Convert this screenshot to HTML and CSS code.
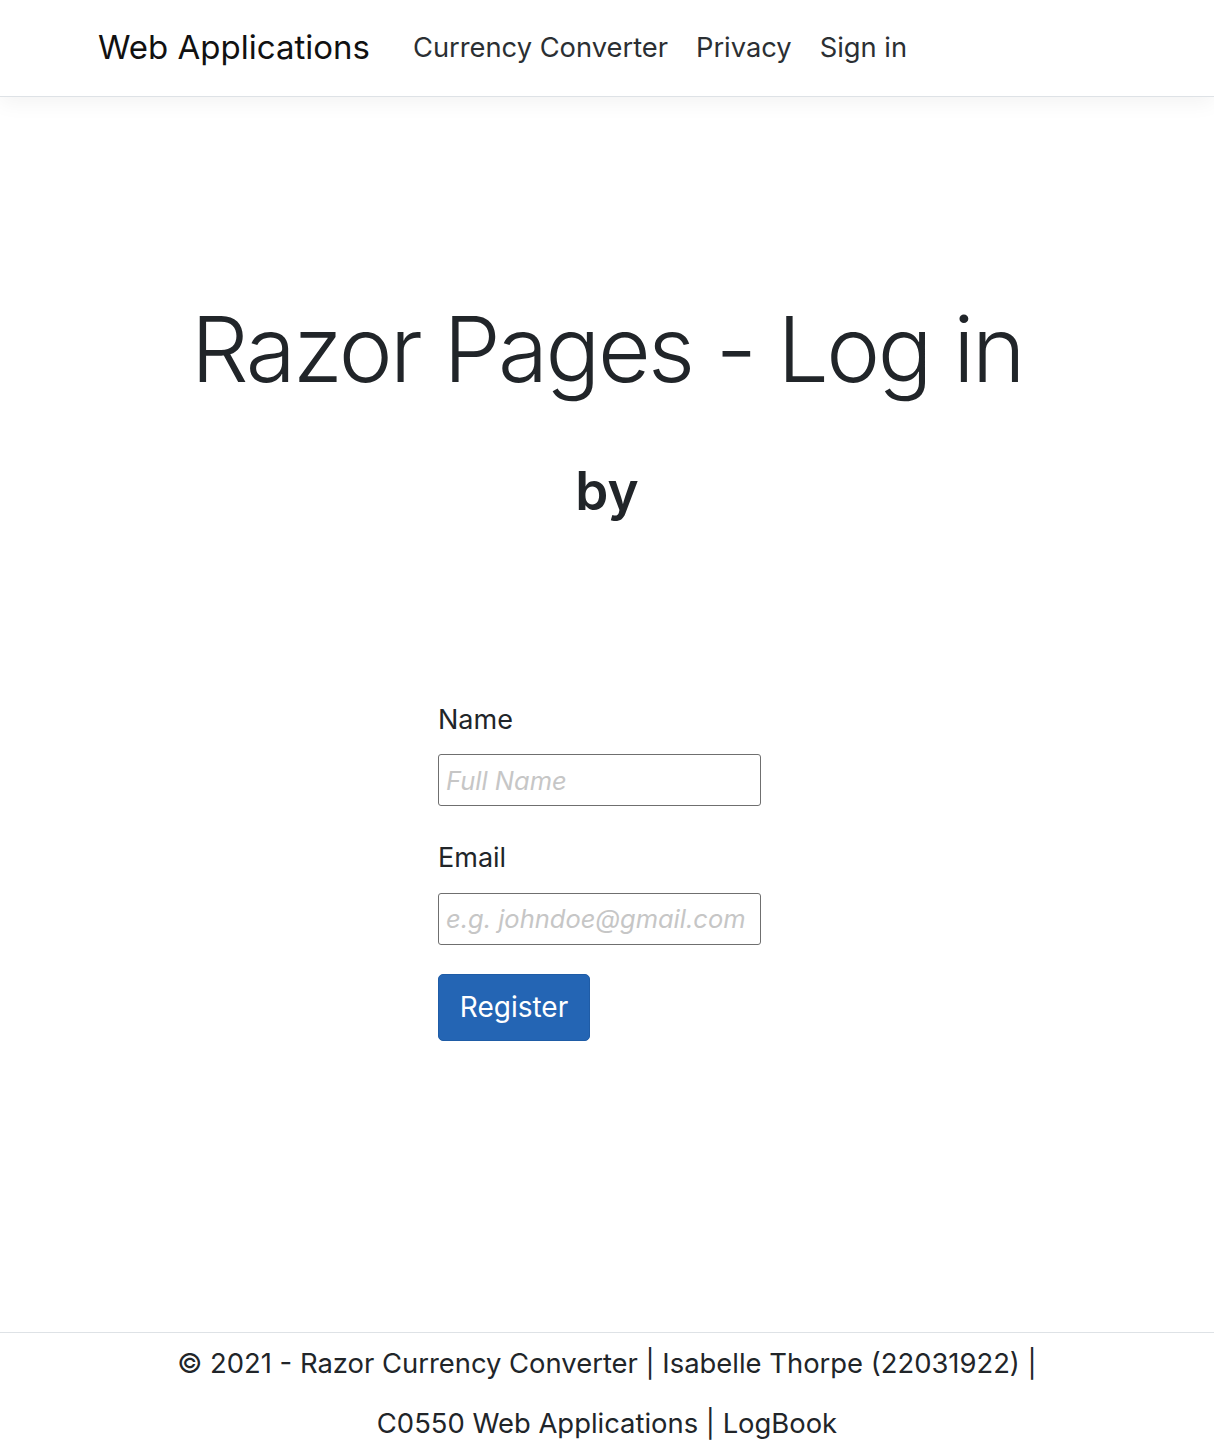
FILE: index.html
```html
<!DOCTYPE html>
<html lang="en">
<head>
<meta charset="utf-8">
<title>Razor Pages - Log in</title>
<link rel="stylesheet" href="styles.css">
</head>
<body>
<header class="navbar">
  <a class="brand" href="#">Web Applications</a>
  <nav class="nav">
    <a class="nav-link" href="#">Currency Converter</a>
    <a class="nav-link" href="#">Privacy</a>
    <a class="nav-link" href="#">Sign in</a>
  </nav>
</header>
<main class="main">
  <h1 class="title">Razor Pages - Log in</h1>
  <h2 class="subtitle">by</h2>
  <form class="form">
    <label class="label" for="name">Name</label>
    <input class="input" id="name" type="text" placeholder="Full Name">
    <label class="label" for="email">Email</label>
    <input class="input input-last" id="email" type="email" placeholder="e.g. johndoe@gmail.com">
    <button class="btn" type="button">Register</button>
  </form>
</main>
<footer class="footer">
  <div class="footer-inner">© 2021 - Razor Currency Converter | Isabelle Thorpe (22031922) | C0550 Web Applications | LogBook</div>
</footer>
</body>
</html>
```

FILE: styles.css
```css
* { box-sizing: border-box; }
html, body { margin: 0; padding: 0; }
body {
  font-family: Inter, "Noto Sans", "Liberation Sans", sans-serif;
  color: #212529;
  background: #fff;
  font-size: 27px;
  line-height: 1.5;
  min-height: 1450px;
  display: flex;
  flex-direction: column;
}
a { text-decoration: none; }

.navbar {
  height: 97px;
  display: flex;
  align-items: center;
  padding-left: 98px;
  border-bottom: 1px solid #dee2e6;
  box-shadow: 0 6px 20px rgba(0,0,0,.05);
  background: #fff;
}
.brand {
  font-size: 33px;
  color: #111;
  margin-right: 29px;
}
.nav { display: flex; }
.nav-link {
  color: #2b2f33;
  font-size: 27.3px;
  padding: 0 14px;
}

.main {
  flex: 1;
  display: flex;
  flex-direction: column;
  align-items: center;
}
.title {
  margin: 198px 0 0;
  font-size: 91px;
  font-weight: 300;
  line-height: 1.2;
  letter-spacing: -2.5px;
}
.subtitle {
  margin: 56px 0 0;
  font-size: 53px;
  font-weight: 600;
  line-height: 1.2;
}
.form {
  margin-top: 176px;
  width: 338px;
  display: flex;
  flex-direction: column;
  align-items: flex-start;
}
.label {
  font-size: 27px;
  line-height: 1.5;
  margin-bottom: 14px;
}
.input {
  width: 323px;
  height: 52px;
  border: 1.5px solid #6f6f6f;
  border-radius: 3px;
  font-family: inherit;
  font-size: 25.5px;
  padding: 0 7px;
  margin-bottom: 32px;
  color: #212529;
}
.input::placeholder {
  color: #c6c6c6;
  font-style: italic;
}
.input-last { margin-bottom: 29px; }
.btn {
  background: #2465b4;
  border: 1px solid #1f5ca6;
  border-radius: 5px;
  color: #fff;
  font-family: inherit;
  font-size: 28px;
  width: 152px;
  height: 67px;
  padding: 0;
}

.footer {
  border-top: 1px solid #dee2e6;
  height: 118px;
  display: flex;
  justify-content: center;
}
.footer-inner {
  width: 900px;
  text-align: center;
  line-height: 60px;
  font-size: 27.4px;
  color: #212529;
}
```
